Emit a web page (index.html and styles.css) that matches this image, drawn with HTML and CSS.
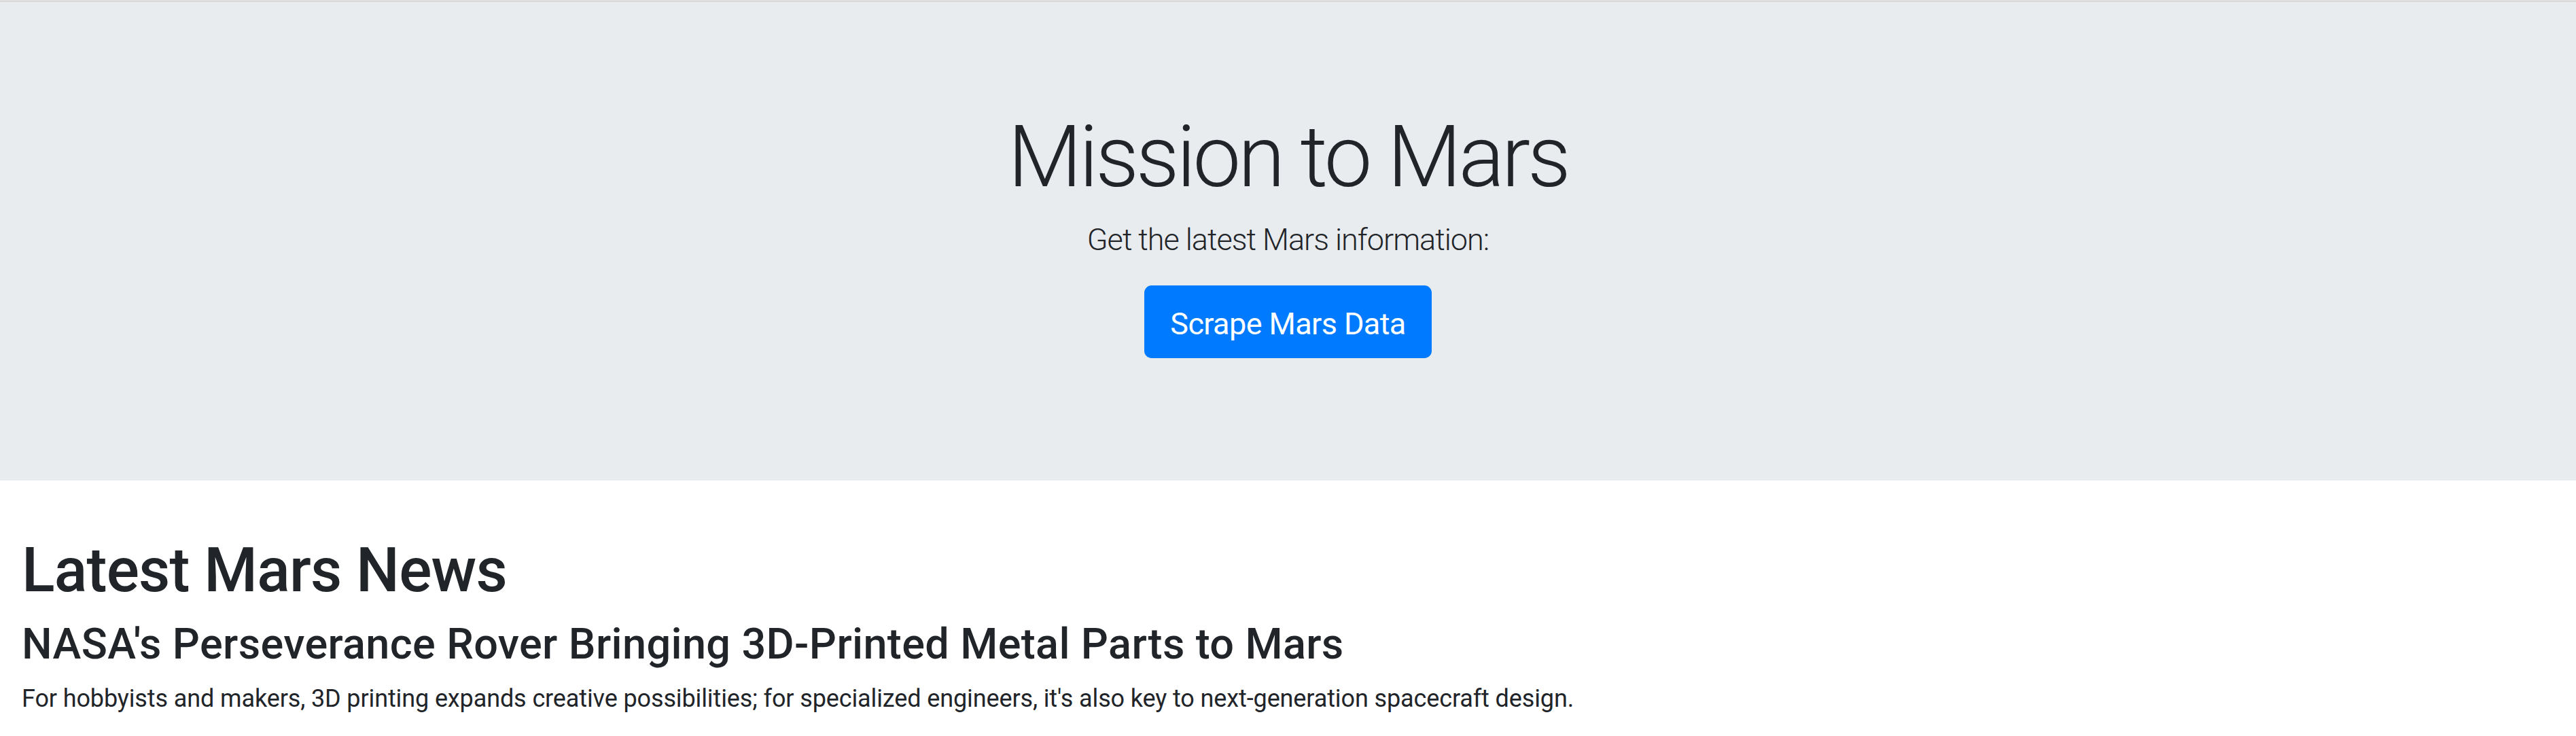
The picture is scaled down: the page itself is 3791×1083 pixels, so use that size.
FILE: index.html
```html
<!DOCTYPE html>
<html lang="en">
<head>
<meta charset="utf-8">
<title>Mission to Mars</title>
<link rel="stylesheet" href="styles.css">
</head>
<body>
<div class="topline"></div>
<div class="jumbotron">
  <h1 class="display">Mission to Mars</h1>
  <p class="lead">Get the latest Mars information:</p>
  <p class="actions"><a class="btn" href="#">Scrape Mars Data</a></p>
</div>
<div class="container">
  <h1 class="section-title">Latest Mars News</h1>
  <h3 class="news-title">NASA's Perseverance Rover Bringing 3D-Printed Metal Parts to Mars</h3>
  <p class="news-body">For hobbyists and makers, 3D printing expands creative possibilities; for specialized engineers, it's also key to next-generation spacecraft design.</p>
</div>
</body>
</html>
```
FILE: styles.css
```css
html {
  font-size: 36px;
}
body {
  margin: 0;
  font-family: Roboto, "Liberation Sans", sans-serif;
  font-size: 1rem;
  line-height: 1.5;
  color: #212529;
  background: #fff;
}
.topline {
  height: 2px;
  border-top: 1px solid #e4e4e4;
  background: #d9d9d9;
}
.jumbotron {
  background: #e9ecef;
  padding: 4rem 2rem;
  margin-bottom: 2rem;
  text-align: center;
}
.display {
  font-size: 3.5rem;
  font-weight: 300;
  line-height: 1.2;
  padding-top: 0.072em;
  margin: 0 0 calc(0.5rem - 0.072em);
  letter-spacing: -4.2px;
}
.lead {
  font-size: 1.25rem;
  font-weight: 300;
  padding-top: 0.072em;
  margin: 0 0 calc(1rem - 0.072em);
  letter-spacing: -1px;
}
.actions {
  margin: 0 0 1rem;
}
.btn {
  display: inline-block;
  font-size: 1.25rem;
  line-height: 1.5;
  padding: calc(0.5rem + 0.072em) 1rem calc(0.5rem - 0.072em);
  border: 2.25px solid #007bff;
  border-radius: 10.8px;
  background: #007bff;
  color: #fff;
  text-decoration: none;
  letter-spacing: -0.6px;
  vertical-align: middle;
}
.container {
  padding: 0 32px;
}
.section-title {
  font-size: 2.5rem;
  font-weight: 500;
  line-height: 1.2;
  padding-top: 0.072em;
  margin: 0 0 calc(0.5rem - 0.072em);
  letter-spacing: -0.8px;
}
.news-title {
  font-size: 1.75rem;
  font-weight: 500;
  line-height: 1.2;
  padding-top: 0.072em;
  margin: 0 0 calc(0.5rem - 0.072em);
  letter-spacing: 0.36px;
}
.news-body {
  padding-top: 0.072em;
  margin: 0 0 calc(1rem - 0.072em);
  letter-spacing: -0.12px;
}
```
